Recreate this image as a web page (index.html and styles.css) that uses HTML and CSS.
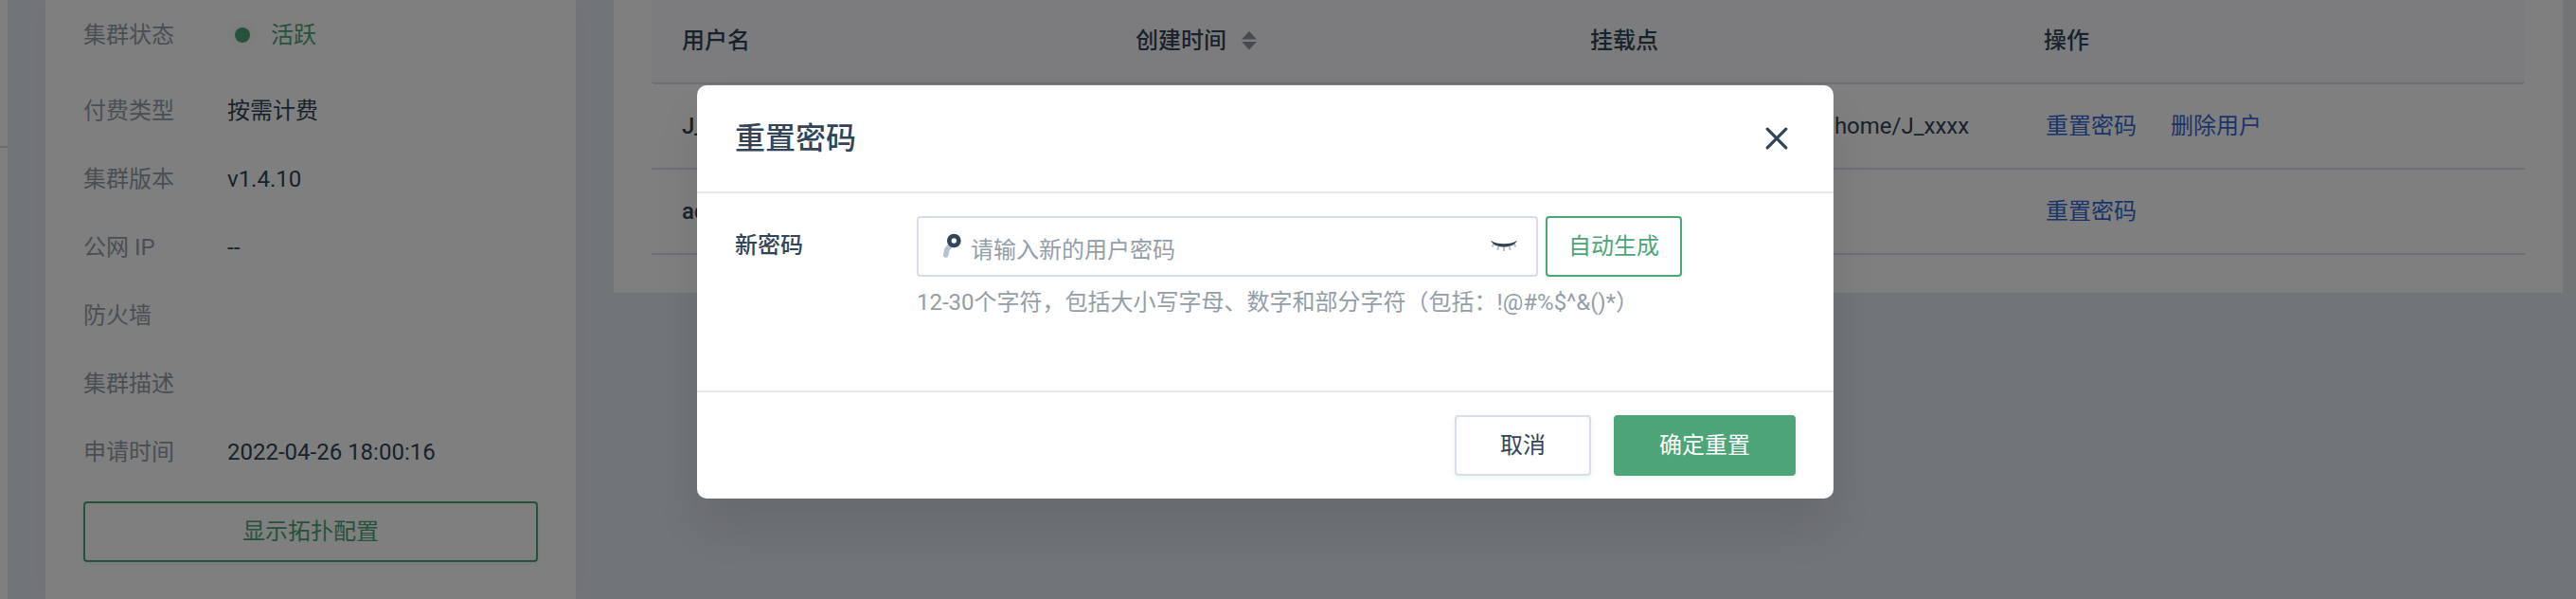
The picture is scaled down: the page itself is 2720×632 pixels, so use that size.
FILE: index.html
```
<!DOCTYPE html>
<html lang="zh-CN">
<head>
<meta charset="utf-8">
<title>重置密码</title>
<link rel="stylesheet" href="styles.css">
</head>
<body>
<div class="page">
  <nav class="side"><div class="side-item"></div></nav>
  <aside class="info">
    <dl class="props">
      <div class="prop prop-status"><dt>集群状态</dt><dd class="status"><i class="dot"></i>活跃</dd></div>
      <div class="prop"><dt>付费类型</dt><dd>按需计费</dd></div>
      <div class="prop"><dt>集群版本</dt><dd>v1.4.10</dd></div>
      <div class="prop"><dt>公网 IP</dt><dd>--</dd></div>
      <div class="prop"><dt>防火墙</dt><dd></dd></div>
      <div class="prop"><dt>集群描述</dt><dd></dd></div>
      <div class="prop"><dt>申请时间</dt><dd>2022-04-26 18:00:16</dd></div>
    </dl>
    <button class="btn btn-outline btn-block">显示拓扑配置</button>
  </aside>
  <main class="users">
    <div class="row head">
      <span>用户名</span>
      <span class="sortable">创建时间
        <svg class="sort" width="16" height="20" viewBox="0 0 16 20"><path d="M8 0l8 8.500H0zM8 19.500L0 11h16z" fill="#8c96a1"/></svg>
      </span>
      <span>挂载点</span>
      <span>操作</span>
    </div>
    <div class="row">
      <span class="name">J_</span><span></span><span class="mount">/home/J_xxxx</span>
      <span class="links"><a>重置密码</a><a>删除用户</a></span>
    </div>
    <div class="row">
      <span class="name">ad</span><span></span><span></span>
      <span class="links"><a>重置密码</a></span>
    </div>
  </main>
</div>
<div class="overlay">
  <section class="modal">
    <header class="modal-head">
      <h2>重置密码</h2>
      <svg class="close" width="24" height="24" viewBox="0 0 24 24"><path d="M2.200 2.200L21.800 21.800M21.800 2.200L2.200 21.800" stroke="#324558" stroke-width="3.200" stroke-linecap="round"/></svg>
    </header>
    <div class="modal-body">
      <label class="label">新密码</label>
      <div class="field">
        <div class="controls">
          <div class="input">
            <svg class="key" width="24" height="28" viewBox="0 0 24 28"><path d="M12 13.500L8 18L6.700 24" fill="none" stroke="#b7c2ce" stroke-width="5.500" stroke-linecap="round" stroke-linejoin="round"/><circle cx="15.300" cy="9" r="5" fill="#fff" stroke="#324558" stroke-width="4.700"/></svg>
            <span class="placeholder">请输入新的用户密码</span>
            <svg class="eye" width="28" height="14" viewBox="0 0 28 14"><path d="M3.500 4L1.500 7.500M8.500 6L7.300 11M14 7V12M19.500 6L20.700 11M24.500 4L26.500 7.500" fill="none" stroke="#b7c2ce" stroke-width="2"/><path d="M0.300 0.700C6 5.500 22 5.500 27.700 0.700C25 9.800 3 9.800 0.300 0.700Z" fill="#324558"/></svg>
          </div>
          <button class="btn btn-outline btn-auto">自动生成</button>
        </div>
        <p class="help">12-30个字符，包括大小写字母、数字和部分字符（包括：!@#%$^&amp;()*）</p>
      </div>
    </div>
    <footer class="modal-foot">
      <button class="btn btn-cancel">取消</button>
      <button class="btn btn-primary">确定重置</button>
    </footer>
  </section>
</div>
</body>
</html>
```
FILE: styles.css
```
* { box-sizing: border-box; }
body {
  margin: 0;
  font: 24px/40px Roboto, "Noto Sans CJK SC", sans-serif;
  color: #324558;
  background: #e5eaf1;
}
.page {
  display: flex;
  align-items: flex-start;
  width: 2720px;
  height: 632px;
  overflow: hidden;
}
.side { width: 8px; height: 632px; margin-right: 40px; background: #fff; }
.side-item { height: 156px; border-bottom: 2px solid #d5dee7; }
.info { width: 560px; height: 632px; padding: 17px 40px 0; margin-right: 40px; background: #fff; box-shadow: 0 0 24px rgba(50, 69, 88, .04); }
.props { margin: 0; }
.prop { display: flex; height: 40px; margin-bottom: 32px; }
.prop-status { height: 48px; }
.prop dt { width: 152px; color: #939ea9; }
.prop dd { margin: 0; }
.prop .status { display: flex; align-items: center; height: 48px; margin-top: -4px; color: #4ca478; }
.dot { width: 16px; height: 16px; margin: 0 22px 0 8px; border-radius: 50%; background: #4ca478; box-shadow: 0 0 0 8px rgba(76, 164, 120, .04); }
.btn {
  height: 64px;
  padding: 0;
  border: 2px solid #4ca478;
  border-radius: 4px;
  background: #fff;
  color: #324558;
  font: inherit;
  line-height: 56px;
  box-shadow: 0 2px 6px rgba(76, 164, 120, .12);
}
.btn-outline { color: #4ca478; }
.btn-block { display: block; width: 480px; margin-top: 1px; }
.users { width: 2058px; height: 309px; padding: 0 40px; background: #fff; }
.row { display: grid; grid-template-columns: 479px 480px 479px 1fr; height: 90px; padding: 0 32px; align-items: center; border-bottom: 2px solid #dddfe8; }
.row.head { height: 89px; padding-bottom: 2px; border-radius: 0 0 4px 4px; background: #f8f9fc; font-weight: 500; }
.sortable { display: flex; align-items: center; gap: 16px; }
.name { font-weight: 500; }
.mount { padding-left: 248px; }
.links { display: flex; gap: 36px; padding-left: 2px; color: #3568d4; }
.overlay { position: absolute; inset: 0; padding: 90px 0 0 736px; background: rgba(0, 0, 0, .5); }
.modal { width: 1200px; height: 436px; border-radius: 10px; background: #fff; box-shadow: 0 32px 48px rgba(3, 5, 7, .09); }
.modal-head { display: flex; align-items: center; justify-content: space-between; height: 114px; padding: 0 48px 0 40px; border-bottom: 2px solid #e5ebf1; }
.modal-head h2 { margin: 0; font-size: 32px; line-height: 48px; font-weight: 500; }
.modal-body { display: flex; height: 208px; padding: 24px 40px 0; }
.label { width: 192px; padding-top: 11px; font-weight: 500; }
.controls { display: flex; gap: 8px; }
.input { display: flex; align-items: center; width: 656px; height: 64px; padding: 0 20px 0 22px; border: 2px solid #d8dee8; border-radius: 4px; }
.key { margin-bottom: 2px; }
.placeholder { flex: 1; margin: 7px 0 0 9px; color: #939ea9; }
.btn-auto, .btn-cancel { width: 144px; }
.help { margin: 7px 0 0; color: #939ea9; }
.modal-foot { display: flex; justify-content: flex-end; gap: 24px; height: 114px; padding: 24px 40px; border-top: 2px solid #e5ebf1; }
.btn-cancel { border-color: #d8dee8; }
.btn-primary { width: 192px; background: #4ca478; color: #fff; }
```
